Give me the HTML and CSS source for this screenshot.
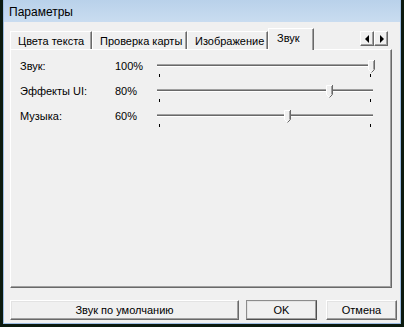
FILE: index.html
```html
<!doctype html>
<html>
<head>
  <meta charset="utf-8">
  <link rel="stylesheet" href="styles.css">
</head>
<body>
  <div class="window">
    <div class="titlebar">Параметры</div>
    <div class="client">
      <div class="tabs">
        <div class="tab tab-colors">Цвета текста</div>
        <div class="tab tab-spell">Проверка карты</div>
        <div class="tab tab-image">Изображение</div>
        <div class="tab tab-sound active">Звук</div>
        <div class="tab-scroll">
          <span class="scroll-btn"><i class="arrow arrow-left"></i></span>
          <span class="scroll-btn"><i class="arrow arrow-right"></i></span>
        </div>
      </div>

      <div class="panel">
        <div class="row">
          <span class="label">Звук:</span>
          <span class="value">100%</span>
          <div class="slider">
            <div class="track"></div>
            <i class="tick tick-min"></i><i class="tick tick-max"></i>
            <svg class="thumb" style="left:211px" width="7" height="13" viewBox="0 0 7 13">
              <polygon points="0,0 7,0 7,9 3.5,12.5 0,9" fill="#f0f0f0"/>
              <polyline points="0.5,9.5 0.5,0.5 6,0.5" fill="none" stroke="#fff"/>
              <polyline points="0.5,9.5 3.5,12.5" fill="none" stroke="#fff"/>
              <polyline points="6.5,0 6.5,9.5 3.5,12.5" fill="none" stroke="#696969"/>
              <line x1="5.5" y1="1" x2="5.5" y2="9.5" stroke="#a0a0a0"/>
            </svg>
          </div>
        </div>
        <div class="row">
          <span class="label">Эффекты UI:</span>
          <span class="value">80%</span>
          <div class="slider">
            <div class="track"></div>
            <i class="tick tick-min"></i><i class="tick tick-max"></i>
            <svg class="thumb" style="left:169px" width="7" height="13" viewBox="0 0 7 13">
              <polygon points="0,0 7,0 7,9 3.5,12.5 0,9" fill="#f0f0f0"/>
              <polyline points="0.5,9.5 0.5,0.5 6,0.5" fill="none" stroke="#fff"/>
              <polyline points="0.5,9.5 3.5,12.5" fill="none" stroke="#fff"/>
              <polyline points="6.5,0 6.5,9.5 3.5,12.5" fill="none" stroke="#696969"/>
              <line x1="5.5" y1="1" x2="5.5" y2="9.5" stroke="#a0a0a0"/>
            </svg>
          </div>
        </div>
        <div class="row">
          <span class="label">Музыка:</span>
          <span class="value">60%</span>
          <div class="slider">
            <div class="track"></div>
            <i class="tick tick-min"></i><i class="tick tick-max"></i>
            <svg class="thumb" style="left:127px" width="7" height="13" viewBox="0 0 7 13">
              <polygon points="0,0 7,0 7,9 3.5,12.5 0,9" fill="#f0f0f0"/>
              <polyline points="0.5,9.5 0.5,0.5 6,0.5" fill="none" stroke="#fff"/>
              <polyline points="0.5,9.5 3.5,12.5" fill="none" stroke="#fff"/>
              <polyline points="6.5,0 6.5,9.5 3.5,12.5" fill="none" stroke="#696969"/>
              <line x1="5.5" y1="1" x2="5.5" y2="9.5" stroke="#a0a0a0"/>
            </svg>
          </div>
        </div>
      </div>

      <div class="buttons">
        <div class="btn btn-default-sound">Звук по умолчанию</div>
        <div class="btn btn-ok">OK</div>
        <div class="btn btn-cancel">Отмена</div>
      </div>
    </div>
  </div>
</body>
</html>
```

FILE: styles.css
```css
* { box-sizing: border-box; }

body {
  margin: 0;
  background: #0b1a0f;
  font-family: "Liberation Sans", Arial, sans-serif;
  font-size: 11px;
  color: #000;
}

.window {
  margin-left: 3px;
  width: 398px;
  height: 324px;
  background: #f0f0f0;
  border: 1px solid #9dbde2;
  border-top: 0;
  display: flex;
  flex-direction: column;
}

.titlebar {
  height: 22px;
  padding: 2px 0 0 5px;
  line-height: 20px;
  font-size: 12px;
  background: linear-gradient(#b9d1ea, #c9dcf0);
}

.client {
  flex: 1;
  padding: 6px 3px 0 6px;
  display: flex;
  flex-direction: column;
}

/* tabs */
.tabs {
  display: flex;
  align-items: flex-end;
  height: 21px;
}

.tab {
  height: 18px;
  padding: 2px 0 0 7px;
  line-height: 14px;
  white-space: nowrap;
  border-top: 1px solid #fff;
  border-left: 1px solid #fff;
  border-right: 1px solid #696969;
  box-shadow: inset -1px 0 #a0a0a0;
}
.tab-colors { width: 82px; }
.tab-spell { width: 95px; }
.tab-image { width: 81px; }
.tab-sound { width: 46px; padding-left: 8px; }

.tab.active {
  position: relative;
  z-index: 1;
  height: 22px;
  margin-bottom: -1px;
  background: #f0f0f0;
}

.tab-scroll {
  display: flex;
  align-self: flex-start;
  margin: 3px 9px 0 auto;
}

.scroll-btn {
  width: 14px;
  height: 15px;
  display: flex;
  align-items: center;
  justify-content: center;
  border: 1px solid;
  border-color: #fff #696969 #696969 #fff;
  box-shadow: inset -1px -1px #a0a0a0;
}

.arrow { width: 0; height: 0; border-top: 4px solid transparent; border-bottom: 4px solid transparent; }
.arrow-left { border-right: 4px solid #000; margin-right: 1px; }
.arrow-right { border-left: 4px solid #000; margin-left: 1px; }

/* panel */
.panel {
  height: 239px;
  margin-right: 5px;
  padding: 4px 0 0 9px;
  border: 1px solid;
  border-color: #fff #696969 #696969 #fff;
  box-shadow: inset -1px -1px #a0a0a0;
}

.row {
  display: grid;
  grid-template-columns: 95px 42px 216px;
  height: 25px;
  line-height: 25px;
}

.slider {
  position: relative;
  padding-top: 10px;
}

.track {
  height: 3px;
  border-top: 1px solid #a0a0a0;
  border-bottom: 1px solid #fff;
  background: #696969;
}

.tick {
  position: absolute;
  top: 20px;
  width: 1px;
  height: 3px;
  background: #000;
}
.tick-min { left: 2px; }
.tick-max { left: 213px; }

.thumb {
  position: absolute;
  top: 6px;
}

/* buttons */
.buttons {
  display: flex;
  margin-top: 12px;
}

.btn {
  height: 20px;
  line-height: 18px;
  text-align: center;
  border: 1px solid;
  border-color: #fff #696969 #696969 #fff;
  box-shadow: inset -1px -1px #a0a0a0, inset 1px 1px #e3e3e3;
}
.btn-default-sound { width: 229px; }
.btn-ok {
  width: 71px;
  margin-left: 7px;
  border-color: #8c8c8c #505050 #505050 #8c8c8c;
}
.btn-cancel { width: 71px; margin-left: 9px; }
```
